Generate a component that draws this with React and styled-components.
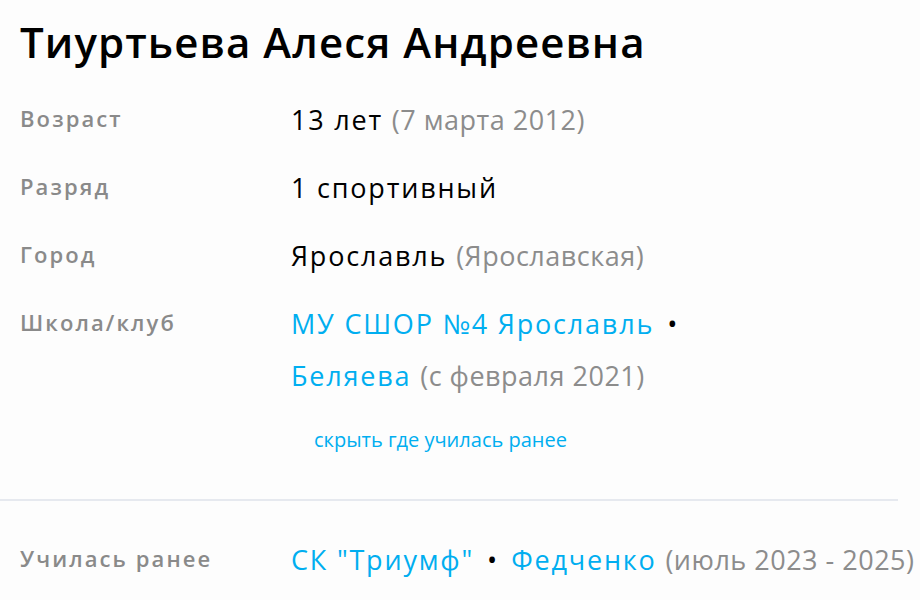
import React from "react";
import styled, { createGlobalStyle } from "styled-components";

const GlobalStyle = createGlobalStyle`
  body {
    margin: 0;
    background: #fdfdfd;
    font-family: "Open Sans", "Noto Sans", sans-serif;
  }
`;

const Page = styled.div`
  width: 920px;
  height: 600px;
  overflow: hidden;
`;

const Title = styled.h1`
  margin: 0;
  padding: 12px 20px 0;
  font-size: 42px;
  font-weight: 600;
  line-height: 60px;
  letter-spacing: 1.1px;
  color: #000;
  white-space: nowrap;
`;

const Info = styled.div`
  padding: 22px 0 0 20px;
`;

const Row = styled.div`
  display: grid;
  grid-template-columns: 271px 1fr;
  margin-bottom: ${({ gap }) => gap ?? 16}px;
`;

const Label = styled.div`
  font-size: 22px;
  font-weight: 600;
  letter-spacing: 2.1px;
  color: #8a8a8a;
  line-height: 48px;
  white-space: nowrap;
`;

const Value = styled.div`
  font-size: 27px;
  letter-spacing: 1.8px;
  color: #000;
  line-height: 52px;
  white-space: nowrap;
`;

const Muted = styled.span`
  color: #8c8c8c;
  letter-spacing: 0.5px;
`;

const Link = styled.a`
  color: #00aef0;
  text-decoration: none;
`;

const Dot = styled.span`
  color: #000;
  margin: 0 14px 0 13px;
  letter-spacing: 0;
`;

const Toggle = styled.a`
  display: block;
  margin: 25px 0 0 23px;
  font-size: 20px;
  letter-spacing: 0;
  line-height: 26px;
  color: #00aef0;
  text-decoration: none;
`;

const Divider = styled.hr`
  margin: 46px 22px 0 0;
  border: 0;
  border-top: 2px solid #e6e9ef;
`;

const Previous = styled.div`
  padding: 33px 0 0 20px;
`;

const App = () => {
  return (
    <Page>
      <GlobalStyle />
      <Title>Тиуртьева Алеся Андреевна</Title>
      <Info>
        <Row>
          <Label>Возраст</Label>
          <Value>
            13 лет <Muted>(7 марта 2012)</Muted>
          </Value>
        </Row>
        <Row>
          <Label>Разряд</Label>
          <Value>1 спортивный</Value>
        </Row>
        <Row>
          <Label>Город</Label>
          <Value>
            Ярославль <Muted>(Ярославская)</Muted>
          </Value>
        </Row>
        <Row gap={0}>
          <Label>Школа/клуб</Label>
          <Value>
            <Link href="#">МУ СШОР №4 Ярославль</Link>
            <Dot>•</Dot>
            <br />
            <Link href="#">Беляева</Link> <Muted>(с февраля 2021)</Muted>
            <Toggle href="#">скрыть где училась ранее</Toggle>
          </Value>
        </Row>
      </Info>
      <Divider />
      <Previous>
        <Row gap={0}>
          <Label>Училась ранее</Label>
          <Value>
            <Link href="#">СК "Триумф"</Link>
            <Dot>•</Dot>
            <Link href="#">Федченко</Link> <Muted>(июль 2023 - 2025)</Muted>
          </Value>
        </Row>
      </Previous>
    </Page>
  );
};

export default App;
